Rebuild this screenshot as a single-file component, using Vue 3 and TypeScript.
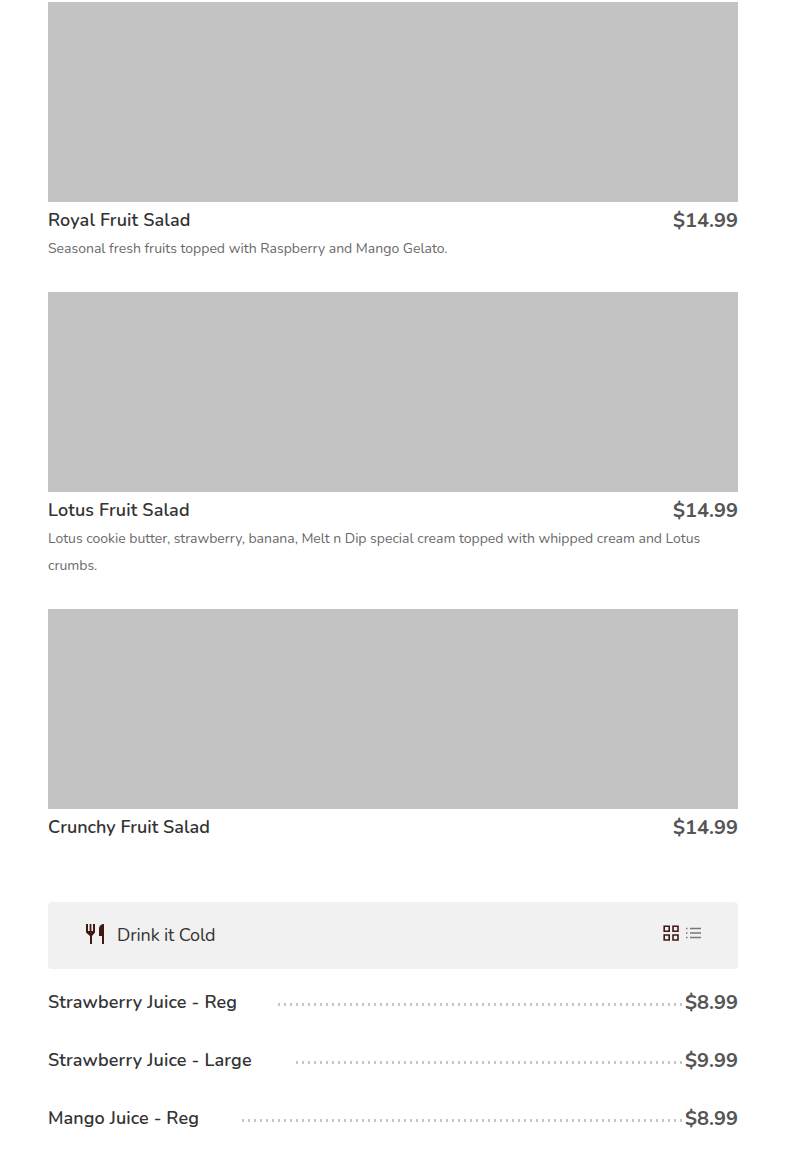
<script setup lang="ts">
interface Dish {
  name: string
  price: string
  description?: string[]
  key: string
}

interface Drink {
  name: string
  price: string
  key: string
}

const dishes: Dish[] = [
  { key: 'royal', name: 'Royal Fruit Salad', price: '$14.99', description: ['Seasonal fresh fruits topped with Raspberry and Mango Gelato.'] },
  {
    key: 'lotus',
    name: 'Lotus Fruit Salad',
    price: '$14.99',
    description: ['Lotus cookie butter, strawberry, banana, Melt n Dip special cream topped with whipped cream and Lotus', 'crumbs.'],
  },
  { key: 'crunchy', name: 'Crunchy Fruit Salad', price: '$14.99' },
]

const drinks: Drink[] = [
  { key: 'straw-reg', name: 'Strawberry Juice - Reg', price: '$8.99' },
  { key: 'straw-large', name: 'Strawberry Juice - Large', price: '$9.99' },
  { key: 'mango-reg', name: 'Mango Juice - Reg', price: '$8.99' },
]
</script>

<template>
  <main class="menu">
    <article v-for="dish in dishes" :key="dish.key" class="dish">
      <div class="photo"></div>
      <div class="heading">
        <h3 class="name" :class="dish.key">{{ dish.name }}</h3>
        <span class="price">{{ dish.price }}</span>
      </div>
      <p v-if="dish.description" class="description" :class="dish.key">
        <span v-for="line in dish.description" :key="line" class="line">{{ line }}</span>
      </p>
    </article>

    <header class="section">
      <svg class="cutlery" viewBox="0 0 20 22" width="20" height="22" aria-hidden="true">
        <path d="M1 1h2v7h1.600V1h1.800v7H8V1h2v8.500L7 13v8H5v-8L1 9.500z" />
        <path d="M19 1v20h-2v-8h-3V6c0-2.800 2-5 5-5z" />
      </svg>
      <h2 class="section-title">Drink it Cold</h2>
      <div class="views">
        <svg class="grid" viewBox="0 0 16 16" width="16" height="16" aria-label="Grid view">
          <path d="M1.200 1.200h5v5h-5zM10 1.200h5v5h-5zM1.200 10h5v5h-5zM10 10h5v5h-5z" />
        </svg>
        <svg class="list" viewBox="0 0 16 12" width="16" height="12" aria-label="List view">
          <path d="M0 1.500h1.500M0 6h1.500M0 10.500h1.500M4 1.500h11M4 6h11M4 10.500h11" />
        </svg>
      </div>
    </header>

    <ul class="drinks">
      <li v-for="drink in drinks" :key="drink.key" class="drink">
        <span class="name" :class="drink.key">{{ drink.name }}</span>
        <span class="leader"></span>
        <span class="price">{{ drink.price }}</span>
      </li>
    </ul>
  </main>
</template>

<style>
body {
  background: #fff;
}
</style>

<style scoped>
.menu {
  box-sizing: border-box;
  width: 785px;
  height: 1157px;
  padding: 2px 47px 0 48px;
  overflow: hidden;
  font-family: Nunito, Lato, "Open Sans", sans-serif;
  color: #333;
}
.dish {
  margin-bottom: 30px;
}
.photo {
  height: 200px;
  background: #c3c3c3;
}
.heading {
  display: flex;
  justify-content: space-between;
  align-items: flex-start;
  box-sizing: border-box;
  height: 33px;
  padding-top: 4px;
}
.name {
  margin: 0;
  font-size: 18px;
  font-weight: 600;
  line-height: 28px;
  letter-spacing: 0.140px;
  white-space: nowrap;
}
.name.crunchy {
  letter-spacing: 0.020px;
}
.price {
  font-size: 20px;
  font-weight: 700;
  line-height: 30px;
  color: #555;
}
.description {
  margin: 0;
  font-size: 14px;
  line-height: 27px;
  color: #6a6a6a;
}
.description.lotus {
  letter-spacing: -0.020px;
}
.line {
  display: block;
  white-space: nowrap;
}
.section {
  display: flex;
  align-items: center;
  box-sizing: border-box;
  height: 67px;
  margin-top: 60px;
  padding: 0 36px 0 37px;
  border-radius: 4px;
  background: #f1f1f1;
}
.cutlery {
  margin: 0 12px 4px 0;
  fill: #3e1a12;
}
.section-title {
  margin: 0 0 2px;
  font-size: 18px;
  font-weight: 400;
  line-height: 28px;
  letter-spacing: -0.140px;
}
.views {
  display: flex;
  align-items: center;
  gap: 7px;
  margin: 0 0 5px auto;
}
.grid path {
  fill: none;
  stroke: #3e1a12;
  stroke-width: 1.600;
}
.list path {
  fill: none;
  stroke: #777;
  stroke-width: 1.300;
}
.drinks {
  display: grid;
  gap: 30px;
  margin: 19px 0 0;
  padding: 0;
  list-style: none;
}
.drink {
  display: flex;
  align-items: flex-start;
  height: 28px;
}
.name.straw-reg {
  width: 230px;
  letter-spacing: 0.160px;
}
.name.straw-large {
  width: 248px;
  letter-spacing: 0.160px;
}
.name.mango-reg {
  width: 194px;
  letter-spacing: 0.100px;
}
.leader {
  flex: 1;
  height: 3px;
  margin: 15px 2px 0 0;
  background: repeating-linear-gradient(to right, #c6c6c6 0 2px, transparent 2px 6px);
}
.drink .price {
  width: 54px;
  text-align: right;
}
</style>
